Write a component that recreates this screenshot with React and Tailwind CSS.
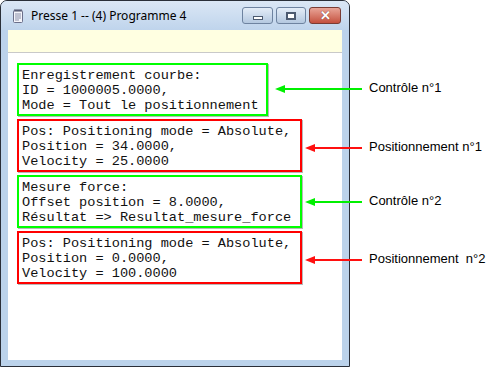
import React from 'react';

const blocks = [
    {
        color: 'green',
        width: 'w-[251px]',
        lines: ['Enregistrement courbe:', 'ID = 1000005.0000,', 'Mode = Tout le positionnement'],
    },
    {
        color: 'red',
        width: 'w-[285px]',
        lines: ['Pos: Positioning mode = Absolute,', 'Position = 34.0000,', 'Velocity = 25.0000'],
    },
    {
        color: 'green',
        width: 'w-[285px]',
        lines: ['Mesure force:', 'Offset position = 8.0000,', 'Résultat => Resultat_mesure_force'],
    },
    {
        color: 'red',
        width: 'w-[285px]',
        lines: ['Pos: Positioning mode = Absolute,', 'Position = 0.0000,', 'Velocity = 100.0000'],
    },
];

const notes = [
    { color: '#00f000', top: 'top-[83px]', left: 'left-[275px]', len: 87, label: 'Contrôle n°1' },
    { color: '#ff1010', top: 'top-[142px]', left: 'left-[305px]', len: 57, label: 'Positionnement n°1' },
    { color: '#00f000', top: 'top-[196px]', left: 'left-[305px]', len: 57, label: 'Contrôle n°2' },
    { color: '#ff1010', top: 'top-[254px]', left: 'left-[305px]', len: 57, label: 'Positionnement\u00a0 n°2' },
];

const Arrow = ({ color, len }) => (
    <svg width={len} height="12" viewBox={`0 0 ${len} 12`} className="shrink-0">
        <line x1="8" y1="6" x2={len} y2="6" stroke={color} strokeWidth="2" />
        <polygon points="0,6 10,2 10,10" fill={color} />
    </svg>
);

const NotepadIcon = () => (
    <svg width="12" height="15" viewBox="0 0 12 15">
        <rect x="1.5" y="2.5" width="9" height="12" rx="1" fill="#f4f4fa" stroke="#6b6f8a" />
        <line x1="3" y1="6" x2="9" y2="6" stroke="#8a8fa8" />
        <line x1="3" y1="8" x2="9" y2="8" stroke="#8a8fa8" />
        <line x1="3" y1="10" x2="9" y2="10" stroke="#8a8fa8" />
        <line x1="3" y1="12" x2="7" y2="12" stroke="#8a8fa8" />
        <path d="M3 1v3M5 1v3M7 1v3M9 1v3" stroke="#4a4e66" strokeWidth="1" />
    </svg>
);

const TitleButton = ({ close, children, width }) => (
    <div
        className={`${width} h-[17px] rounded-[3px] border flex items-center justify-center ${
            close
                ? 'border-[#7a3c34] bg-gradient-to-b from-[#e8a497] to-[#c4503f]'
                : 'border-[#6e83a0] bg-gradient-to-b from-[#e4edf7] to-[#b4c8e0]'
        }`}
    >
        {children}
    </div>
);

export default function App() {
    return (
        <div className="relative w-[498px] h-[367px] bg-white" style={{ fontFamily: '"Liberation Sans", Arial, sans-serif' }}>
            <div className="w-[350px] h-[367px] border border-[#2a2f38] rounded-t-[7px] bg-[#bcd3eb] flex flex-col overflow-hidden">
                <div className="h-[29px] shrink-0 flex items-center bg-gradient-to-b from-[#dbe7f5] to-[#bfd4ec] pl-[11px] pr-[8px]">
                    <NotepadIcon />
                    <span className="ml-[7px] text-[12px] text-black" style={{ fontFamily: '"Noto Sans", "Open Sans", sans-serif' }}>
                        Presse 1 -- (4) Programme 4
                    </span>
                    <div className="ml-auto flex gap-[3px] items-center">
                        <TitleButton width="w-[31px]">
                            <div className="w-[10px] h-[4px] bg-white border border-[#4c5a70] mt-[5px]" />
                        </TitleButton>
                        <TitleButton width="w-[30px]">
                            <div className="w-[10px] h-[8px] bg-white border-[2px] border-[#4c5a70]" />
                        </TitleButton>
                        <TitleButton close width="w-[32px]">
                            <span className="text-white font-bold text-[13px] leading-none" style={{ textShadow: '0 0 1px #5a1f18' }}>✕</span>
                        </TitleButton>
                    </div>
                </div>
                <div className="flex-1 mx-[7px] mb-[6px] flex flex-col">
                    <div className="h-[23px] bg-[#ffffe1] border-b border-[#c9c9c9] shrink-0" />
                    <div className="flex-1 bg-white pt-[10px] pl-[9px] flex flex-col gap-[3px]">
                        {blocks.map((b, i) => (
                            <div
                                key={i}
                                className={`${b.width} h-[53px] border-2 pl-[3px] pt-[3px] shadow-[1px_1px_0_#b8b8b8] ${
                                    b.color === 'green' ? 'border-[#00ff00]' : 'border-[#ff0000]'
                                }`}
                            >
                                {b.lines.map((l, j) => (
                                    <div
                                        key={j}
                                        className="text-[13.6px] leading-[15px] text-[#111] whitespace-pre"
                                        style={{ fontFamily: '"Liberation Mono", "Courier New", monospace' }}
                                    >
                                        {l}
                                    </div>
                                ))}
                            </div>
                        ))}
                    </div>
                </div>
            </div>

            {notes.map((n, i) => (
                <div key={i} className={`absolute ${n.top} ${n.left} flex items-center h-[12px]`}>
                    <Arrow color={n.color} len={n.len} />
                    <span className="ml-[7px] mt-[-3px] text-[13px] text-black whitespace-pre leading-none">{n.label}</span>
                </div>
            ))}
        </div>
    );
}
